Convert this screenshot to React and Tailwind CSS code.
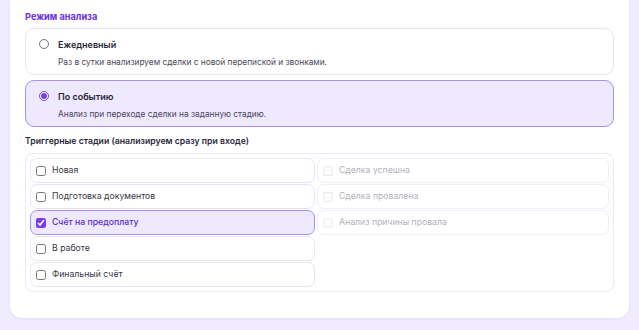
import React, { useState } from "react";

const leftStages = [
  { name: "Новая", checked: false },
  { name: "Подготовка документов", checked: false },
  { name: "Счёт на предоплату", checked: true },
  { name: "В работе", checked: false },
  { name: "Финальный счёт", checked: false },
];

const rightStages = ["Сделка успешна", "Сделка провалена", "Анализ причины провала"];

const modes = [
  { id: "daily", title: "Ежедневный", desc: "Раз в сутки анализируем сделки с новой перепиской и звонками." },
  { id: "event", title: "По событию", desc: "Анализ при переходе сделки на заданную стадию." },
];

export default function App() {
  const [mode, setMode] = useState("event");

  return (
    <div className="h-[330px] w-full bg-[#f0ecfd] px-[10px] font-['Inter',sans-serif] text-[#2a2736]">
      <div className="h-[318px] rounded-b-xl bg-white px-[15px] pt-[10px] shadow-[0_1px_3px_rgba(90,70,160,0.08)]">
        {/* Режим */}
        <h3 className="text-[9.2px] font-bold leading-[14px] text-[#6a2ee0]">Режим анализа</h3>

        <div className="mt-[4px] flex flex-col gap-[5px]">
          {modes.map((m) => {
            const active = mode === m.id;
            return (
              <label
                key={m.id}
                className={`flex h-[47px] cursor-pointer items-start gap-[9px] rounded-[9px] border px-[13px] pt-[9px] ${
                  active ? "border-[#a890f7] bg-[#eee9fe]" : "border-[#e8e3f9] bg-white"
                }`}
              >
                <input
                  type="radio"
                  name="mode"
                  checked={active}
                  onChange={() => setMode(m.id)}
                  className="mt-[1px] h-[10px] w-[10px] accent-[#7c3aed]"
                />
                <div className="flex flex-col">
                  <span className="text-[9px] font-semibold leading-[13px] text-[#2a2736]">{m.title}</span>
                  <span className="mt-[5px] text-[8.3px] leading-[12px] text-[#4a4657]">{m.desc}</span>
                </div>
              </label>
            );
          })}
        </div>

        {/* Триггерные стадии */}
        <h4 className="mt-[7px] text-[8.7px] font-semibold leading-[14px] text-[#2a2736]">
          Триггерные стадии (анализируем сразу при входе)
        </h4>

        <div className="mt-[5px] grid grid-cols-[285px_1fr] gap-x-[2px] rounded-[8px] border border-[#ebe6f9] p-[4px]">
          <div className="flex flex-col gap-[1px]">
            {leftStages.map((s) => (
              <label
                key={s.name}
                className={`flex h-[25px] items-center gap-[6px] rounded-[7px] border px-[5px] text-[8.7px] ${
                  s.checked
                    ? "border-[#a890f7] bg-[#eee9fe] font-medium text-[#5b2bd0]"
                    : "border-[#e8e3f9] bg-white text-[#3a3746]"
                }`}
              >
                <input type="checkbox" defaultChecked={s.checked} className="h-[10px] w-[10px] accent-[#7c3aed]" />
                {s.name}
              </label>
            ))}
          </div>
          <div className="flex flex-col gap-[1px]">
            {rightStages.map((name) => (
              <label
                key={name}
                className="flex h-[25px] items-center gap-[6px] rounded-[7px] border border-[#f1eefa] bg-white px-[5px] text-[8.7px] text-[#b4b1bd]"
              >
                <input type="checkbox" disabled className="h-[10px] w-[10px] opacity-40" />
                {name}
              </label>
            ))}
          </div>
        </div>
      </div>
    </div>
  );
}
